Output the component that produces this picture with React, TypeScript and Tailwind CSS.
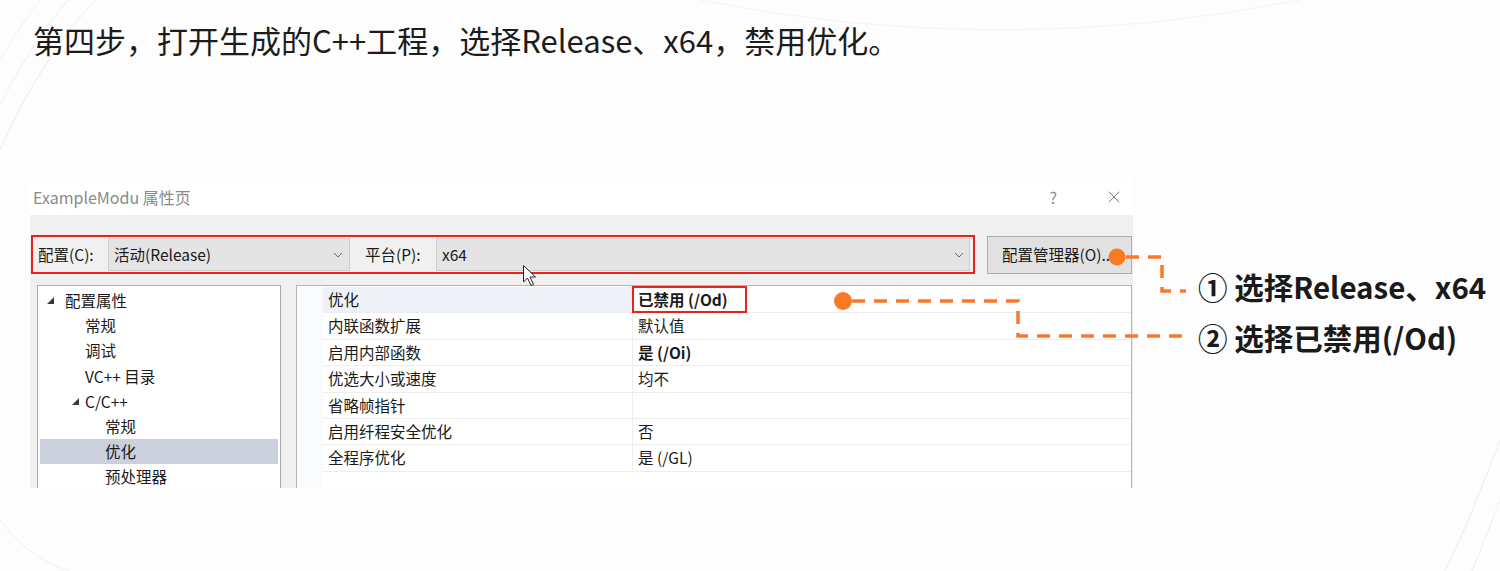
import React from "react";
import { X } from "lucide-react";

const tree = [
  { t: "配置属性", pad: "pl-[7px]", tri: true, gap: "mr-[11px]" },
  { t: "常规", pad: "pl-[45px]" },
  { t: "调试", pad: "pl-[45px]" },
  { t: "VC++ 目录", pad: "pl-[45px]" },
  { t: "C/C++", pad: "pl-[32px]", tri: true, gap: "mr-[6px]" },
  { t: "常规", pad: "pl-[65px]" },
  { t: "优化", pad: "pl-[65px]", sel: true },
  { t: "预处理器", pad: "pl-[65px]" },
];

const rows: { n: string; v: string; b?: boolean; red?: boolean; hl?: boolean }[] = [
  { n: "优化", v: "已禁用 (/Od)", b: true, red: true, hl: true },
  { n: "内联函数扩展", v: "默认值" },
  { n: "启用内部函数", v: "是 (/Oi)", b: true },
  { n: "优选大小或速度", v: "均不" },
  { n: "省略帧指针", v: "" },
  { n: "启用纤程安全优化", v: "否" },
  { n: "全程序优化", v: "是 (/GL)" },
];

function Tri() {
  return (
    <svg width="7" height="7" viewBox="0 0 7 7" className="shrink-0">
      <polygon points="7,0 7,7 0,7" fill="#3a3a3a" />
    </svg>
  );
}

function Chevron() {
  return (
    <svg width="10" height="6" viewBox="0 0 10 6">
      <polyline points="1,1 5,5 9,1" fill="none" stroke="#6b6b6b" strokeWidth="1" />
    </svg>
  );
}

export default function App() {
  return (
    <div className="relative w-[1500px] h-[571px] overflow-hidden bg-[#fdfdfd] font-['Noto_Sans_CJK_SC',sans-serif] text-[#1a1a1a]">
      {/* faint slide decoration */}
      <svg className="absolute inset-0 pointer-events-none" width="1500" height="571">
        <path d="M0 150 Q40 60 95 0" fill="none" stroke="#ececec" strokeWidth="1" />
        <path d="M0 105 Q30 45 68 0" fill="none" stroke="#efefef" strokeWidth="1" />
        <path d="M0 60 Q20 25 40 0" fill="none" stroke="#f1f1f1" strokeWidth="1" />
        <path d="M0 520 Q30 560 70 571" fill="none" stroke="#f1f1f1" strokeWidth="1" />
        <path d="M1500 440 Q1470 520 1445 571" fill="none" stroke="#ececec" strokeWidth="1" />
        <path d="M1500 500 Q1485 540 1472 571" fill="none" stroke="#efefef" strokeWidth="1" />
        <path d="M700 0 Q1000 60 1300 0" fill="none" stroke="#f3f3f3" strokeWidth="1" />
      </svg>

      <h1 className="relative pt-[24px] pl-[33px] text-[31px] leading-[32px] font-normal text-[#1c1c1c]">
        第四步，打开生成的C++工程，选择Release、x64，禁用优化。
      </h1>

      <div className="relative mt-[122px] flex">
        {/* dialog */}
        <div className="ml-[30px] w-[1103px] shrink-0">
          <div className="h-[37px] flex items-center bg-white pl-[3px]">
            <span className="text-[16px] text-[#8a8a8a]">ExampleModu 属性页</span>
            <span className="ml-auto text-[16px] text-[#8a8a8a] mr-[47px]">?</span>
            <X size={20} strokeWidth={1.1} color="#6a6a6a" className="mr-[9px]" />
          </div>
          <div className="h-[273px] bg-[#f0f0f0] pt-[20px] overflow-hidden text-[15.5px]">
            {/* toolbar */}
            <div className="flex items-start">
              <div className="ml-[1px] w-[944px] h-[39px] border-2 border-[#e8231c] flex items-center pl-[5px] pr-[3px]">
                <span className="w-[70px] shrink-0">配置(C):</span>
                <div className="w-[242px] h-[33px] shrink-0 bg-[#e4e4e4] border border-[#cfcfcf] flex items-center pl-[5px] pr-[6px]">
                  <span>活动(Release)</span>
                  <span className="ml-auto">
                    <Chevron />
                  </span>
                </div>
                <span className="ml-[15px] w-[71px] shrink-0">平台(P):</span>
                <div className="flex-1 h-[33px] bg-[#e4e4e4] border border-[#cfcfcf] flex items-center pl-[5px] pr-[5px]">
                  <span>x64</span>
                  <span className="ml-auto">
                    <Chevron />
                  </span>
                </div>
              </div>
              <div className="ml-[12px] mt-[1px] w-[145px] h-[38px] bg-[#e1e1e1] border border-[#adadad] flex items-center pl-[14px]">
                配置管理器(O)...
              </div>
            </div>

            {/* panels */}
            <div className="mt-[11px] flex h-[203px]">
              <div className="ml-[7px] w-[244px] h-full border border-b-0 border-[#ababab] bg-white pt-[2px] px-[2px]">
                {tree.map((it, i) => (
                  <div
                    key={i}
                    className={`h-[25.2px] flex items-center ${it.pad} ${it.sel ? "bg-[#cbd0dc]" : ""}`}
                  >
                    {it.tri && (
                      <span className={it.gap}>
                        <Tri />
                      </span>
                    )}
                    <span>{it.t}</span>
                  </div>
                ))}
              </div>
              <div className="ml-[15px] w-[836px] h-full border border-b-0 border-[#b4b4b4] bg-white flex pt-[1px]">
                <div className="w-[26px] shrink-0 bg-[#fafbfc]" />
                <div className="flex-1">
                  {rows.map((r, i) => (
                    <div key={i} className="h-[26.4px] flex border-b border-[#ededed]">
                      <div
                        className={`w-[310px] shrink-0 border-r border-[#ededed] flex items-center pl-[5px] ${r.hl ? "bg-[#eef1f7]" : ""}`}
                      >
                        {r.n}
                      </div>
                      <div className={`flex-1 flex items-center ${r.b ? "font-bold" : ""}`}>
                        {r.red ? (
                          <div className="-ml-[1px] -mt-[1px] w-[115px] h-[27px] border-2 border-[#e8231c] flex items-center pl-[4px]">
                            {r.v}
                          </div>
                        ) : (
                          <span className="pl-[5px]">{r.v}</span>
                        )}
                      </div>
                    </div>
                  ))}
                </div>
              </div>
            </div>
          </div>
        </div>

        {/* annotation labels */}
        <div className="ml-[65px] pt-[91px] flex flex-col gap-[16px] text-[29.5px] leading-[35px] font-bold text-[#1a1a1a] whitespace-nowrap">
          <span>① 选择Release、x64</span>
          <span>② 选择已禁用(/Od)</span>
        </div>
      </div>

      {/* connectors + cursor overlay */}
      <svg className="absolute inset-0 pointer-events-none" width="1500" height="571">
        <g fill="none" stroke="#f9792a" strokeWidth="3.5" strokeDasharray="13 9">
          <path d="M1126 257 H1162 V291 H1186" />
          <path d="M852 301 H1018 V336 H1184" />
        </g>
        <circle cx="1117" cy="257" r="8.5" fill="#fa7a22" />
        <circle cx="843" cy="301" r="9" fill="#fa7a22" />
        <path
          d="M523.5 265.5 L523.5 282 L527.5 278 L531 285.5 L533.5 284.5 L530 277 L535.5 277 Z"
          fill="#ffffff"
          stroke="#222"
          strokeWidth="1"
        />
      </svg>
    </div>
  );
}
